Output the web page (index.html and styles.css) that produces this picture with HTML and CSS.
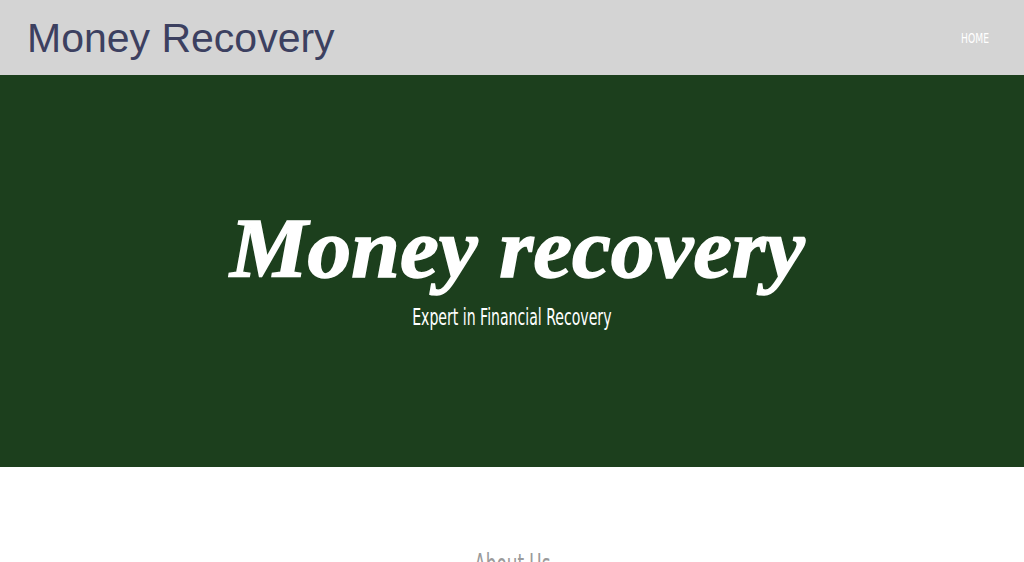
FILE: index.html
```html
<!DOCTYPE html>
<html lang="en">
<head>
<meta charset="utf-8">
<title>Money Recovery</title>
<link rel="stylesheet" href="styles.css">
</head>
<body>
<header class="site-header">
  <div class="brand">Money Recovery</div>
  <nav class="nav"><a class="nav-link" href="#">HOME</a></nav>
</header>
<section class="hero">
  <h1 class="hero-title">Money recovery</h1>
  <p class="hero-sub">Expert in Financial Recovery</p>
</section>
<section class="about">
  <h2 class="about-title">About Us</h2>
</section>
</body>
</html>
```
FILE: styles.css
```css
html, body {
  margin: 0;
  padding: 0;
  background: #ffffff;
  overflow: hidden;
}
body {
  font-family: "Liberation Sans", Arial, sans-serif;
}
.site-header {
  height: 75px;
  background: #d4d4d4;
  display: flex;
  align-items: center;
  justify-content: space-between;
  padding: 0 35px 0 27px;
  box-sizing: border-box;
}
.brand {
  font-size: 41px;
  color: #3c4060;
  line-height: 1;
  margin-top: 2px;
}
.nav-link {
  display: inline-block;
  font-family: "DejaVu Sans", sans-serif;
  font-size: 13.5px;
  color: #ffffff;
  text-decoration: none;
  transform: scaleX(0.68);
  transform-origin: right center;
  margin-top: 2px;
}
.hero {
  height: 392px;
  background: #1c3f1d;
  display: flex;
  flex-direction: column;
  align-items: center;
  padding-top: 132px;
  box-sizing: border-box;
  color: #ffffff;
}
.hero-title {
  margin: 0 0 0 10px;
  font-family: "Liberation Serif", "Times New Roman", serif;
  font-style: italic;
  font-weight: 700;
  font-size: 84px;
  line-height: 1;
  letter-spacing: 0;
  -webkit-text-stroke: 1.5px #ffffff;
  transform: scaleX(1.04);
}
.hero-sub {
  display: inline-block;
  margin: 15px 0 0;
  font-family: "DejaVu Sans", sans-serif;
  font-size: 23px;
  line-height: 1;
  transform: scaleX(0.612);
}
.about {
  display: flex;
  justify-content: center;
  padding-top: 84px;
}
.about-title {
  display: inline-block;
  margin: 0;
  font-family: "DejaVu Sans", sans-serif;
  font-weight: 400;
  font-size: 28px;
  line-height: 1;
  color: #9a9a9a;
  transform: scaleX(0.6);
}
```
